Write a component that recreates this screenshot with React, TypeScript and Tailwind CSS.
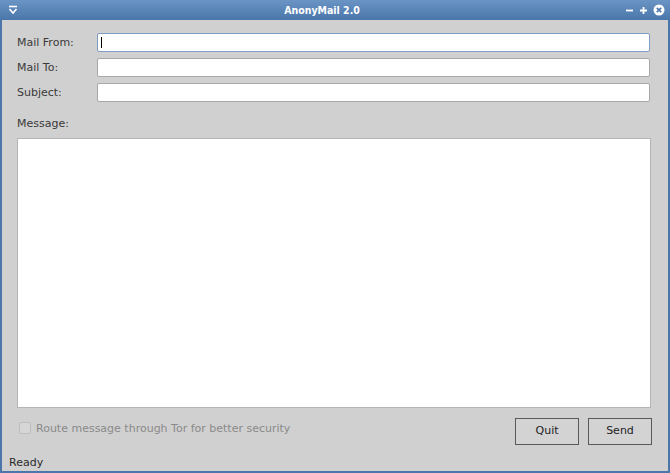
import React from "react";

function TitleBar() {
  return (
    <div className="relative flex h-5 items-center bg-gradient-to-b from-[#6a94c4] to-[#4a76aa] px-1 text-white">
      <svg width="12" height="12" viewBox="0 0 12 12" className="ml-[3px]">
        <path d="M2 2.5h8" stroke="white" strokeWidth="1.6" />
        <path d="M2.5 5l3.5 4 3.5-4" stroke="white" strokeWidth="1.6" fill="none" />
      </svg>
      <div
        className="flex-1 text-center text-[10.5px] font-bold leading-none"
        style={{ fontFamily: '"DejaVu Sans Condensed", "DejaVu Sans", sans-serif' }}
      >
        AnonyMail 2.0
      </div>
      <div className="flex items-center gap-[5px] pr-[1px]">
        <svg width="9" height="9" viewBox="0 0 9 9">
          <path d="M1 4.5h7" stroke="white" strokeWidth="1.8" />
        </svg>
        <svg width="9" height="9" viewBox="0 0 9 9">
          <path d="M1 4.5h7M4.5 1v7" stroke="white" strokeWidth="1.8" />
        </svg>
        <svg width="12" height="12" viewBox="0 0 12 12">
          <circle cx="6" cy="6" r="5.5" fill="white" />
          <path d="M3.8 3.8l4.4 4.4M8.2 3.8l-4.4 4.4" stroke="#4f7bb0" strokeWidth="1.7" />
        </svg>
      </div>
    </div>
  );
}

function Field({ label, focused }: { label: string; focused?: boolean }) {
  return (
    <div className="flex h-[19px] items-center">
      <div className="w-[80px] text-[11px] leading-none text-[#3a3a3a]">{label}</div>
      <div
        className={
          focused
            ? "relative h-full flex-1 rounded-[2px] border border-[#7e9cc4] bg-white"
            : "relative h-full flex-1 rounded-[2px] border border-[#a8a8a8] bg-white"
        }
      >
        {focused && <div className="absolute left-[3px] top-[3px] h-[11px] w-px bg-black" />}
      </div>
    </div>
  );
}

export default function App() {
  return (
    <div
      className="flex h-[473px] w-[670px] flex-col bg-[#4a76aa]"
      style={{ fontFamily: '"DejaVu Sans", "Noto Sans", sans-serif' }}
    >
      <TitleBar />
      <div className="mx-[2px] mb-[2px] flex flex-1 flex-col bg-[#d0d0d0]">
        <div className="flex flex-col gap-[6px] pl-[15px] pr-[18px] pt-[13px]">
          <Field label="Mail From:" focused />
          <Field label="Mail To:" />
          <Field label="Subject:" />
        </div>
        <div className="mt-[16px] pl-[15px] text-[11px] leading-none text-[#3a3a3a]">Message:</div>
        <div className="ml-[15px] mr-[17px] mt-[9px] h-[270px] border border-[#b4b4b4] bg-white" />
        <div className="mt-[10px] flex items-start pl-[17px] pr-[16px]">
          <div className="mt-[4px] flex items-center gap-[5px]">
            <div className="h-[12px] w-[12px] rounded-[2px] border border-[#bdbdbd] bg-[#d6d6d6]" />
            <span className="text-[11px] leading-none text-[#8a8a8a]">
              Route message through Tor for better security
            </span>
          </div>
          <div className="flex-1" />
          <button className="h-[27px] w-[64px] border border-[#5a5a5a] bg-[#d3d3d3] text-[11px] text-[#222]">
            Quit
          </button>
          <button className="ml-[9px] h-[27px] w-[64px] border border-[#5a5a5a] bg-[#d3d3d3] text-[11px] text-[#222]">
            Send
          </button>
        </div>
        <div className="flex-1" />
        <div className="pb-[3px] pl-[7px] text-[11px] leading-none text-[#2a2a2a]">Ready</div>
      </div>
    </div>
  );
}
